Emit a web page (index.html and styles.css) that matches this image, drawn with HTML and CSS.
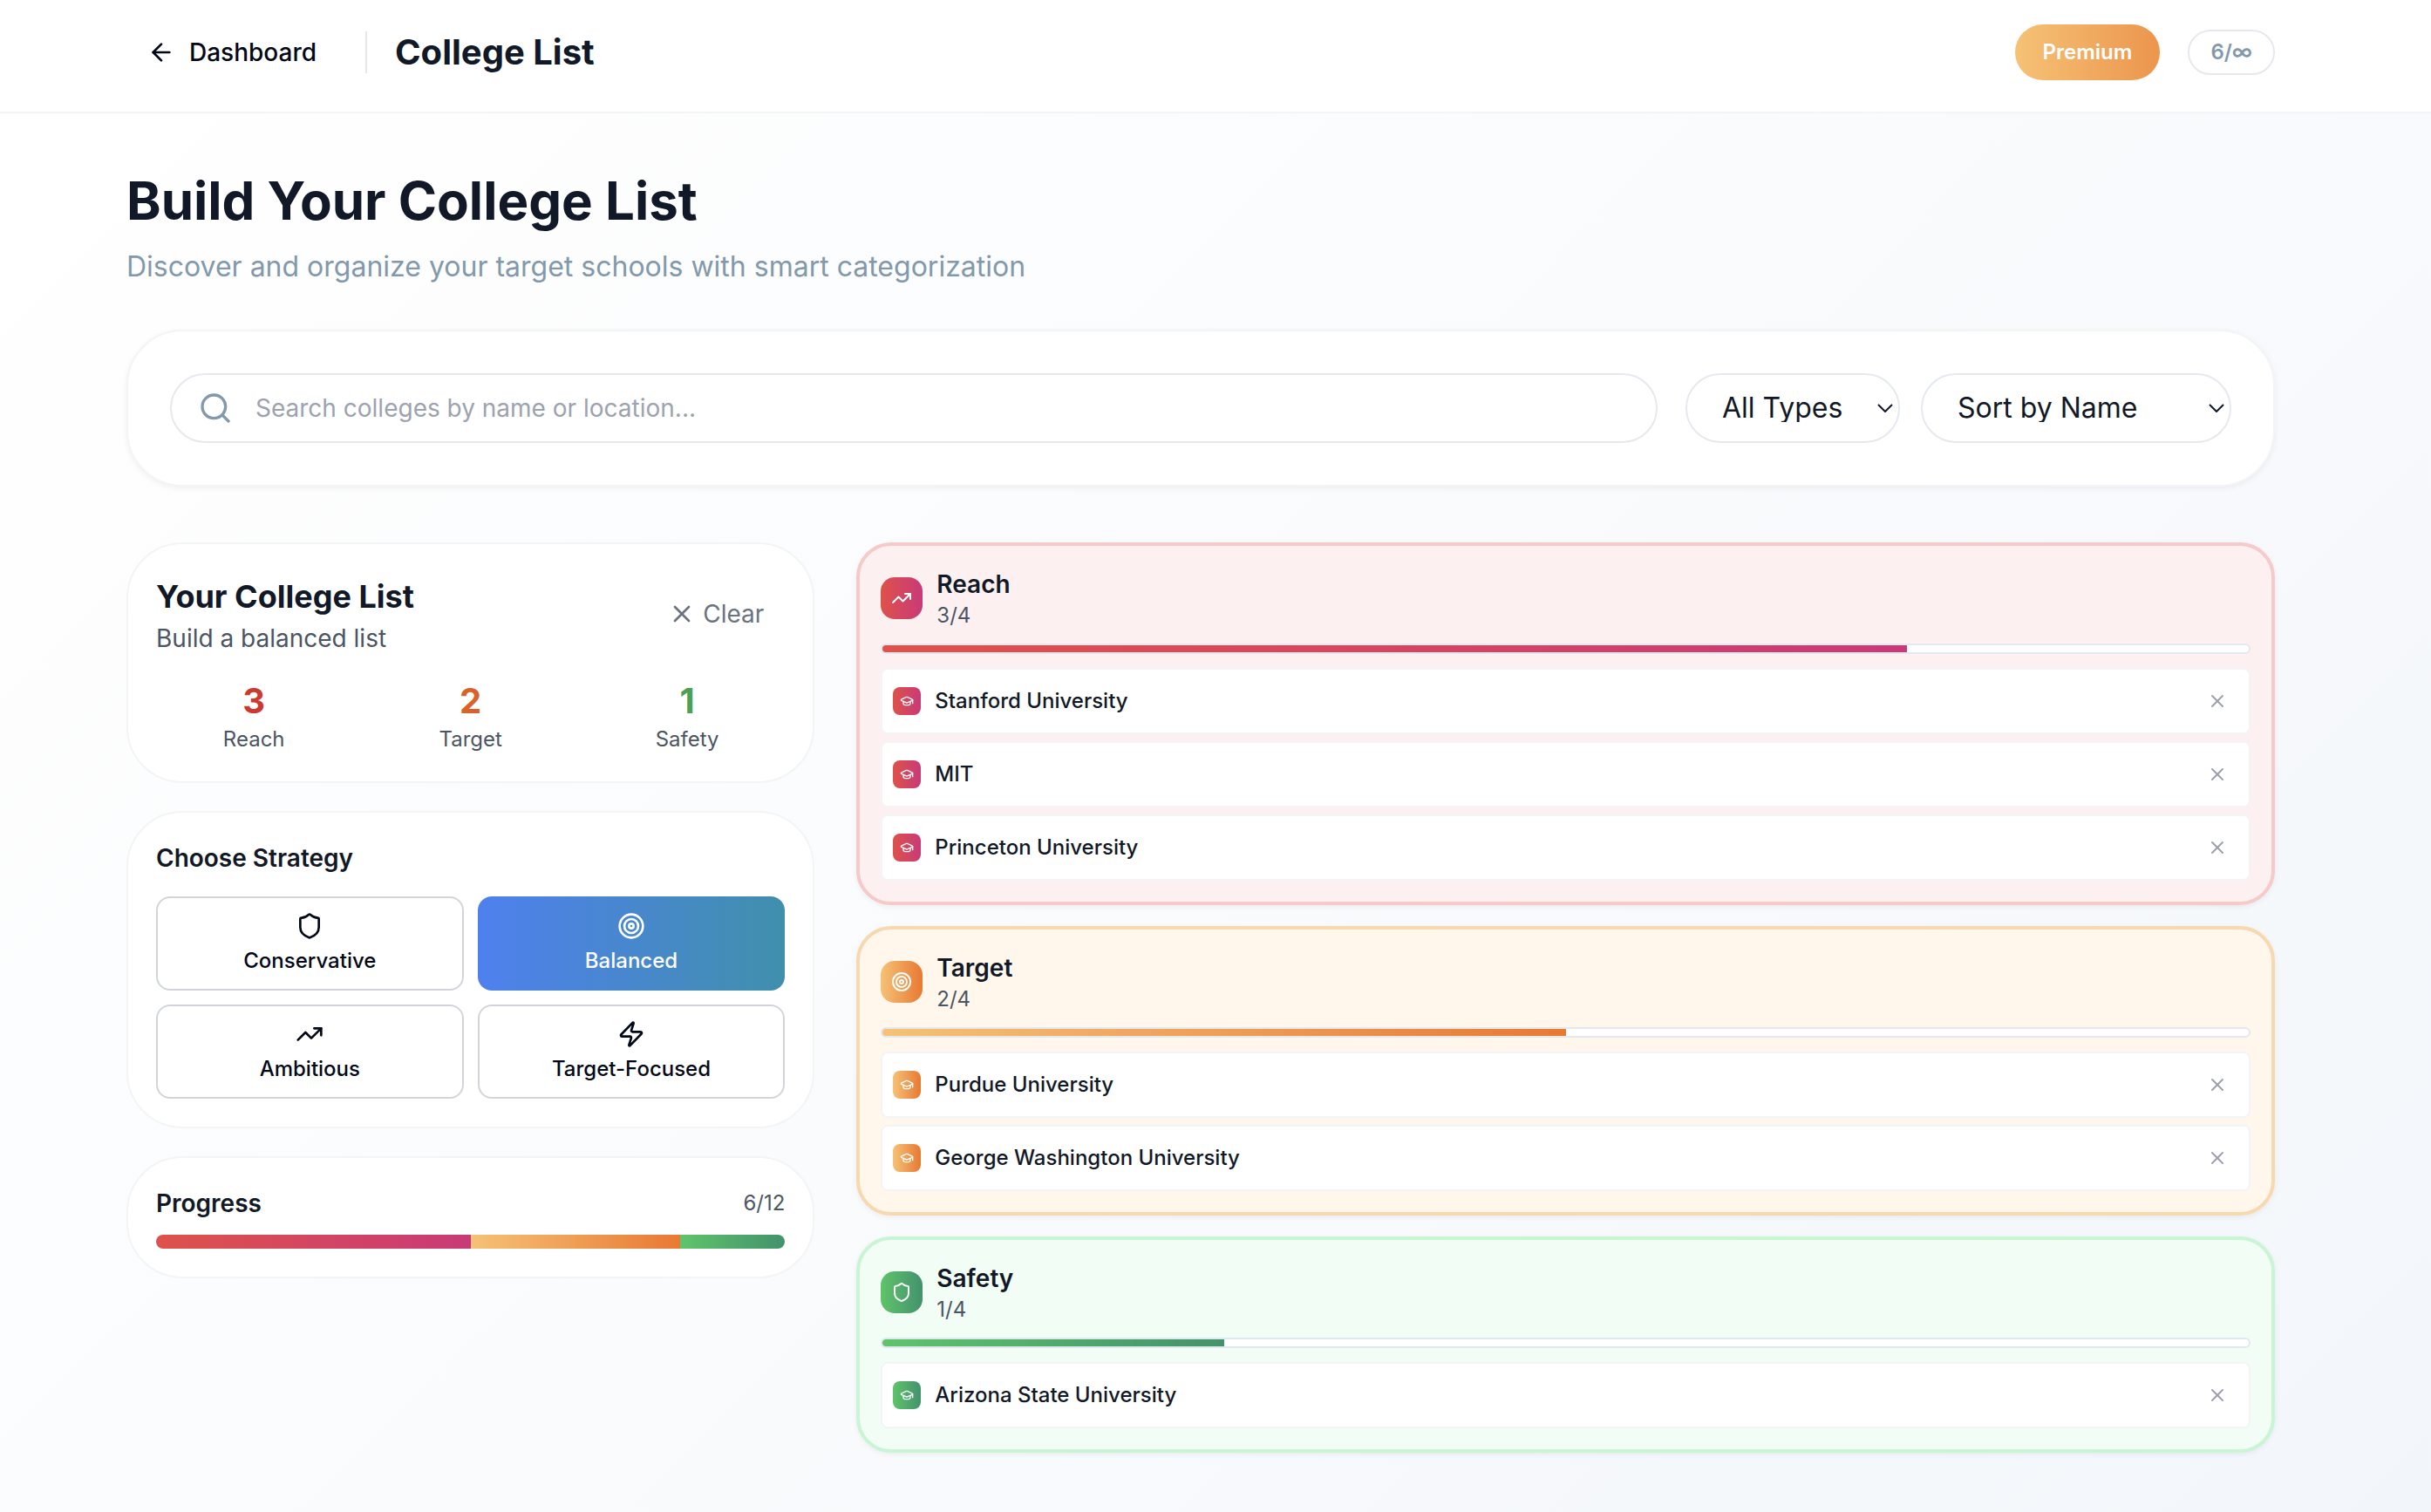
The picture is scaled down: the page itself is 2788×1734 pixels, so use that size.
FILE: index.html
```html
<!DOCTYPE html>
<html lang="en">
  <head>
    <meta charset="utf-8" />
    <meta name="viewport" content="width=device-width, initial-scale=1" />
    <title>College List</title>
    <link rel="stylesheet" href="styles.css">
  </head>

  <body>
    <!-- shared icons -->
    <svg class="sprite" aria-hidden="true">
      <symbol id="arrow-left" viewBox="0 0 24 24"><path d="m12 19-7-7 7-7" /><path d="M19 12H5" /></symbol>
      <symbol id="search" viewBox="0 0 24 24"><circle cx="11" cy="11" r="8" /><path d="m21 21-4.3-4.3" /></symbol>
      <symbol id="x" viewBox="0 0 24 24"><path d="M18 6 6 18" /><path d="m6 6 12 12" /></symbol>
      <symbol id="shield" viewBox="0 0 24 24"><path d="M20 13c0 5-3.5 7.5-7.66 8.95a1 1 0 0 1-.67-.01C7.5 20.5 4 18 4 13V6a1 1 0 0 1 1-1c2 0 4.5-1.2 6.24-2.72a1.17 1.17 0 0 1 1.52 0C14.51 3.81 17 5 19 5a1 1 0 0 1 1 1z" /></symbol>
      <symbol id="target" viewBox="0 0 24 24"><circle cx="12" cy="12" r="10" /><circle cx="12" cy="12" r="6" /><circle cx="12" cy="12" r="2" /></symbol>
      <symbol id="trending-up" viewBox="0 0 24 24"><path d="m22 7-8.5 8.5-5-5L2 17" /><path d="M16 7h6v6" /></symbol>
      <symbol id="zap" viewBox="0 0 24 24"><path d="M4 14a1 1 0 0 1-.78-1.63l9.9-10.2a.5.5 0 0 1 .86.46l-1.92 6.02A1 1 0 0 0 13 10h7a1 1 0 0 1 .78 1.63l-9.9 10.2a.5.5 0 0 1-.86-.46l1.92-6.02A1 1 0 0 0 11 14z" /></symbol>
      <symbol id="cap" viewBox="0 0 24 24"><path d="M21.42 10.922a1 1 0 0 0-.019-1.838L12.83 5.18a2 2 0 0 0-1.66 0L2.6 9.08a1 1 0 0 0 0 1.832l8.57 3.908a2 2 0 0 0 1.66 0z" /><path d="M22 10v6" /><path d="M6 12.5V16a6 3 0 0 0 12 0v-3.5" /></symbol>
    </svg>

    <header class="header">
      <div class="container header-row">
        <a class="back" href="#"><svg class="icon"><use href="#arrow-left" /></svg>Dashboard</a>
        <span class="divider"></span>
        <span class="header-title">College List</span>
        <button class="premium" type="button">Premium</button>
        <span class="count">6/∞</span>
      </div>
    </header>

    <main class="main">
      <div class="container">
        <h1>Build Your College List</h1>
        <p class="subtitle">Discover and organize your target schools with smart categorization</p>

        <form class="card filters">
          <div class="search">
            <svg class="icon search-icon"><use href="#search" /></svg>
            <input type="text" aria-label="Search colleges" placeholder="Search colleges by name or location..." />
          </div>
          <div class="selects">
            <div class="select select-type">
              <select aria-label="Type">
                <option>All Types</option>
                <option>Public</option>
                <option>Private</option>
              </select>
              <svg class="chevron" viewBox="0 0 18 10"><path d="m1 1 8 8 8-8" /></svg>
            </div>
            <div class="select select-sort">
              <select aria-label="Sort">
                <option>Sort by Name</option>
                <option>Sort by Ranking</option>
              </select>
              <svg class="chevron" viewBox="0 0 18 10"><path d="m1 1 8 8 8-8" /></svg>
            </div>
          </div>
        </form>

        <div class="columns">
          <aside class="sidebar">
            <section class="card panel">
              <div class="row">
                <div>
                  <h2>Your College List</h2>
                  <p class="hint">Build a balanced list</p>
                </div>
                <button class="clear" type="button"><svg class="icon"><use href="#x" /></svg>Clear</button>
              </div>
              <div class="stats">
                <div><div class="stat red">3</div>Reach</div>
                <div><div class="stat orange">2</div>Target</div>
                <div><div class="stat green">1</div>Safety</div>
              </div>
            </section>

            <section class="card panel">
              <h3>Choose Strategy</h3>
              <div class="strategies">
                <button class="strategy" type="button"><svg class="icon"><use href="#shield" /></svg>Conservative</button>
                <button class="strategy active" type="button"><svg class="icon"><use href="#target" /></svg>Balanced</button>
                <button class="strategy" type="button"><svg class="icon"><use href="#trending-up" /></svg>Ambitious</button>
                <button class="strategy" type="button"><svg class="icon"><use href="#zap" /></svg>Target-Focused</button>
              </div>
            </section>

            <section class="card panel">
              <div class="row">
                <h3>Progress</h3>
                <span class="small">6/12</span>
              </div>
              <div class="total">
                <div class="fill-reach" style="width: 50%"></div>
                <div class="fill-target" style="width: 33.33%"></div>
                <div class="fill-safety" style="width: 16.67%"></div>
              </div>
            </section>
          </aside>

          <div class="groups">
            <section class="group reach">
              <div class="group-head">
                <div class="badge fill-reach"><svg class="icon"><use href="#trending-up" /></svg></div>
                <div>
                  <h3>Reach</h3>
                  <p class="small">3/4</p>
                </div>
              </div>
              <div class="meter"><div class="fill-reach" style="width: 75%"></div></div>
              <ul class="schools">
                <li><span class="tag fill-reach"><svg class="icon"><use href="#cap" /></svg></span>Stanford University<button class="remove" type="button" aria-label="Remove"><svg class="icon"><use href="#x" /></svg></button></li>
                <li><span class="tag fill-reach"><svg class="icon"><use href="#cap" /></svg></span>MIT<button class="remove" type="button" aria-label="Remove"><svg class="icon"><use href="#x" /></svg></button></li>
                <li><span class="tag fill-reach"><svg class="icon"><use href="#cap" /></svg></span>Princeton University<button class="remove" type="button" aria-label="Remove"><svg class="icon"><use href="#x" /></svg></button></li>
              </ul>
            </section>

            <section class="group target">
              <div class="group-head">
                <div class="badge fill-target"><svg class="icon"><use href="#target" /></svg></div>
                <div>
                  <h3>Target</h3>
                  <p class="small">2/4</p>
                </div>
              </div>
              <div class="meter"><div class="fill-target" style="width: 50%"></div></div>
              <ul class="schools">
                <li><span class="tag fill-target"><svg class="icon"><use href="#cap" /></svg></span>Purdue University<button class="remove" type="button" aria-label="Remove"><svg class="icon"><use href="#x" /></svg></button></li>
                <li><span class="tag fill-target"><svg class="icon"><use href="#cap" /></svg></span>George Washington University<button class="remove" type="button" aria-label="Remove"><svg class="icon"><use href="#x" /></svg></button></li>
              </ul>
            </section>

            <section class="group safety">
              <div class="group-head">
                <div class="badge fill-safety"><svg class="icon"><use href="#shield" /></svg></div>
                <div>
                  <h3>Safety</h3>
                  <p class="small">1/4</p>
                </div>
              </div>
              <div class="meter"><div class="fill-safety" style="width: 25%"></div></div>
              <ul class="schools">
                <li><span class="tag fill-safety"><svg class="icon"><use href="#cap" /></svg></span>Arizona State University<button class="remove" type="button" aria-label="Remove"><svg class="icon"><use href="#x" /></svg></button></li>
              </ul>
            </section>
          </div>
        </div>
      </div>
    </main>
  </body>
</html>
```

FILE: styles.css
```css
* {
  box-sizing: border-box;
  margin: 0;
  padding: 0;
}

body {
  min-height: 100vh;
  font-family: Inter, sans-serif;
  font-size: 24px;
  line-height: 32px;
  color: #111827;
  background: linear-gradient(135deg, #ffffff, #fafbfd 50%, #f2f6fa);
}

button,
input,
select {
  font: inherit;
  color: inherit;
  background: none;
  border: none;
}

button {
  cursor: pointer;
}

.sprite {
  display: none;
}

.icon {
  width: 32px;
  height: 32px;
  flex-shrink: 0;
  fill: none;
  stroke: currentColor;
  stroke-width: 2;
  stroke-linecap: round;
  stroke-linejoin: round;
}

.container {
  max-width: 2560px;
  margin: 0 auto;
  padding: 0 48px;
}

/* header */
.header {
  padding: 28px 34px 36px 0;
  background: #ffffff;
  border-bottom: 2px solid #f3f4f6;
}

.header-row {
  display: flex;
  align-items: center;
  gap: 32px;
}

.back {
  display: flex;
  align-items: center;
  gap: 16px;
  padding: 0 24px;
  font-size: 28px;
  font-weight: 500;
  line-height: 40px;
  color: #020817;
  text-decoration: none;
}

.divider {
  width: 2px;
  height: 48px;
  background: #e5e7eb;
}

.header-title {
  font-size: 40px;
  font-weight: 700;
  line-height: 56px;
}

.premium {
  margin-left: auto;
  padding: 16px 32px;
  border-radius: 32px;
  font-weight: 600;
  color: #ffffff;
  background: linear-gradient(to right, #f5c276, #ec954d);
}

.count {
  padding: 8px 24px;
  border: 2px solid #e5e9ef;
  border-radius: 32px;
  font-weight: 600;
  color: #8299ab;
  background: #ffffff;
}

/* page */
.main {
  padding: 64px 34px 64px 0;
}

h1 {
  font-size: 60px;
  font-weight: 700;
  line-height: 72px;
}

h2 {
  font-size: 36px;
  font-weight: 700;
  line-height: 56px;
}

h3 {
  font-size: 28px;
  font-weight: 600;
  line-height: 40px;
}

.subtitle {
  margin-top: 16px;
  font-size: 32px;
  line-height: 48px;
  color: #8299ab;
}

.small {
  color: #4b5563;
}

.card {
  background: #ffffff;
  border: 2px solid #f3f4f6;
  border-radius: 64px;
}

/* search and filters */
.filters {
  display: flex;
  gap: 32px;
  margin-top: 48px;
  padding: 48px;
  box-shadow: 0 2px 6px rgba(0, 0, 0, 0.06);
}

.search {
  position: relative;
  flex: 1;
}

.search-icon {
  position: absolute;
  top: 20px;
  left: 32px;
  width: 40px;
  height: 40px;
  color: #8299ab;
}

.search input {
  width: 100%;
  height: 80px;
  padding: 0 32px 0 96px;
  border: 2px solid #e5e9ef;
  border-radius: 40px;
  font-size: 28px;
}

.search input::placeholder {
  color: #9ca3af;
}

.selects {
  display: flex;
  gap: 24px;
}

.select {
  position: relative;
}

.select-type {
  width: 246px;
}

.select-sort {
  width: 356px;
}

.select select {
  appearance: none;
  width: 100%;
  height: 80px;
  padding: 0 40px;
  border: 2px solid #e5e9ef;
  border-radius: 40px;
  font-size: 32px;
}

.chevron {
  position: absolute;
  top: 35px;
  right: 8px;
  width: 18px;
  height: 10px;
  fill: none;
  stroke: #111827;
  stroke-width: 2;
  pointer-events: none;
}

/* two column area */
.columns {
  display: grid;
  grid-template-columns: repeat(3, 1fr);
  gap: 48px;
  align-items: start;
  margin-top: 64px;
}

.sidebar {
  display: grid;
  gap: 32px;
}

.panel {
  padding: 32px;
}

.row {
  display: flex;
  align-items: center;
  justify-content: space-between;
}

.hint {
  font-size: 28px;
  line-height: 40px;
  color: #4b5563;
}

.clear {
  display: flex;
  align-items: center;
  gap: 8px;
  padding: 16px 24px;
  font-size: 28px;
  color: #6b7280;
}

.stats {
  display: grid;
  grid-template-columns: repeat(3, 1fr);
  gap: 24px;
  margin-top: 24px;
  text-align: center;
  color: #4b5563;
}

.stat {
  font-size: 40px;
  font-weight: 700;
  line-height: 56px;
}

.red {
  color: #cb3a31;
}

.orange {
  color: #d9622b;
}

.green {
  color: #4ca154;
}

.strategies {
  display: grid;
  grid-template-columns: 1fr 1fr;
  gap: 16px;
  margin-top: 24px;
}

.strategy {
  display: flex;
  flex-direction: column;
  align-items: center;
  gap: 8px;
  padding: 16px;
  border: 2px solid #d1d5db;
  border-radius: 16px;
  font-weight: 500;
  color: #020817;
}

.strategy.active {
  padding: 18px;
  border: none;
  color: #ffffff;
  background: linear-gradient(to right, #4f80ee, #408fac);
}

.total {
  display: flex;
  height: 16px;
  margin-top: 16px;
  border-radius: 8px;
  overflow: hidden;
}

.fill-reach {
  background: linear-gradient(to right, #de524b, #c83a77);
}

.fill-target {
  background: linear-gradient(to right, #f5c276, #e87933);
}

.fill-safety {
  background: linear-gradient(to right, #5fc46a, #43926c);
}

/* school groups */
.groups {
  grid-column: span 2;
  display: grid;
  gap: 24px;
}

.group {
  padding: 24px;
  border: 4px solid;
  border-radius: 40px;
  box-shadow: 0 2px 6px rgba(0, 0, 0, 0.06);
}

.reach {
  background: #fcf1f0;
  border-color: #f5cac9;
}

.target {
  background: #fff6ec;
  border-color: #f8d8af;
}

.safety {
  background: #f2fdf5;
  border-color: #c8f5d3;
}

.group-head {
  display: flex;
  align-items: center;
  gap: 16px;
}

.badge,
.tag {
  display: flex;
  align-items: center;
  justify-content: center;
  color: #ffffff;
}

.badge {
  width: 48px;
  height: 48px;
  border-radius: 16px;
}

.badge .icon {
  width: 24px;
  height: 24px;
}

.meter {
  height: 12px;
  margin: 16px 0;
  border: 2px solid #e2e8f0;
  border-radius: 6px;
  background: #ffffff;
  overflow: hidden;
}

.meter div {
  height: 8px;
}

.schools {
  display: grid;
  gap: 8px;
  list-style: none;
}

.schools li {
  display: flex;
  align-items: center;
  gap: 16px;
  padding: 12px;
  border: 2px solid #f3f4f6;
  border-radius: 8px;
  font-weight: 500;
  background: #ffffff;
}

.tag {
  width: 32px;
  height: 32px;
  border-radius: 8px;
}

.tag .icon {
  width: 16px;
  height: 16px;
}

.remove {
  display: flex;
  margin-left: auto;
  padding: 12px;
  color: #9ca3af;
}

.remove .icon {
  width: 24px;
  height: 24px;
}
```
